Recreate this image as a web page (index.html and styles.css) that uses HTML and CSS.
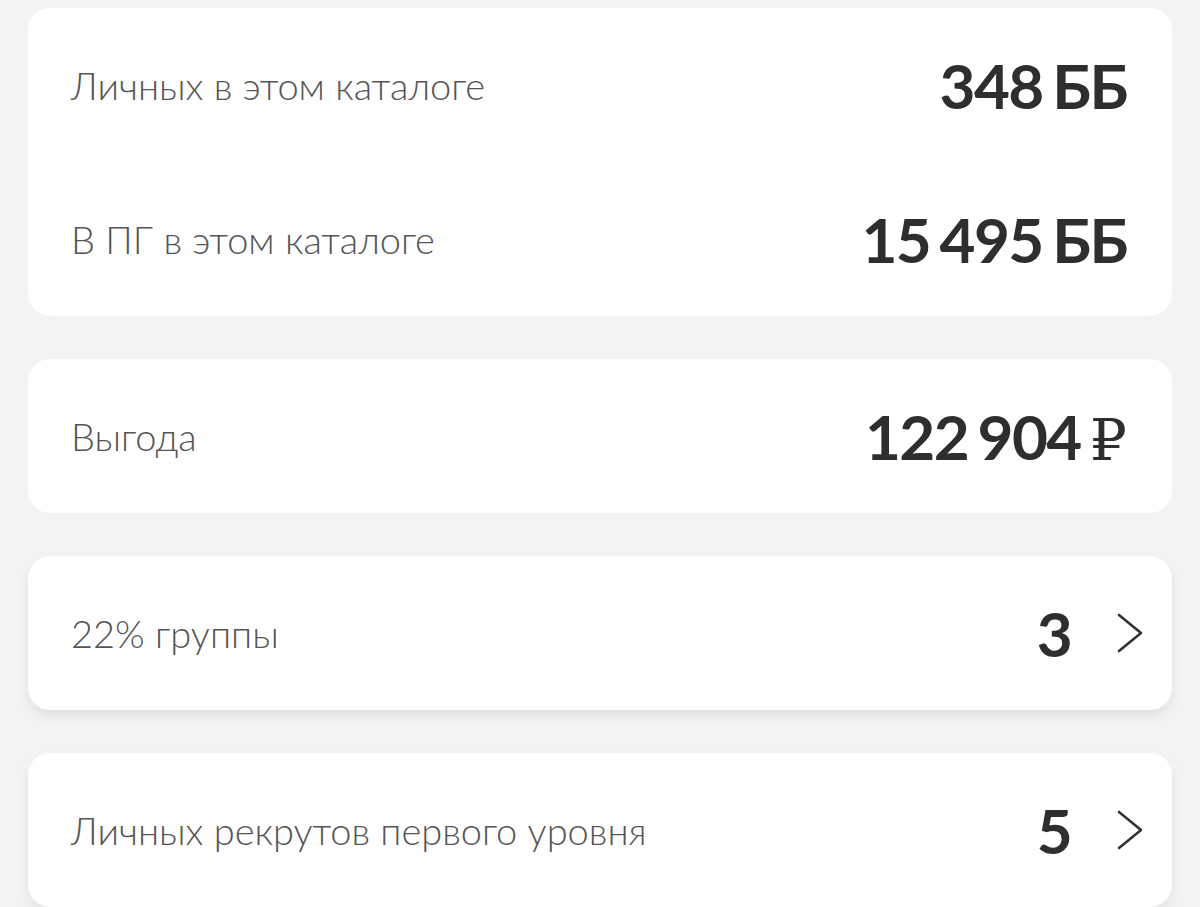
FILE: index.html
```html
<!DOCTYPE html>
<html lang="ru">
<head>
<meta charset="utf-8">
<link rel="stylesheet" href="styles.css">
</head>
<body>
<main class="page">
  <section class="card">
    <div class="row">
      <span class="label">Личных в этом каталоге</span>
      <span class="value">348 ББ</span>
    </div>
    <div class="row">
      <span class="label">В ПГ в этом каталоге</span>
      <span class="value">15 495 ББ</span>
    </div>
  </section>
  <section class="card">
    <div class="row">
      <span class="label">Выгода</span>
      <span class="value">122 904 <span class="rub">₽</span></span>
    </div>
  </section>
  <section class="card card-link">
    <div class="row row-link">
      <span class="label">22% группы</span>
      <span class="value-wrap">
        <span class="value">3</span>
        <svg class="chevron" viewBox="0 0 26 40" width="26" height="40"><path d="M2 2 L24 20 L2 38" fill="none" stroke="#333" stroke-width="2.6" stroke-linecap="round" stroke-linejoin="round"/></svg>
      </span>
    </div>
  </section>
  <section class="card card-link">
    <div class="row row-link">
      <span class="label">Личных рекрутов первого уровня</span>
      <span class="value-wrap">
        <span class="value">5</span>
        <svg class="chevron" viewBox="0 0 26 40" width="26" height="40"><path d="M2 2 L24 20 L2 38" fill="none" stroke="#333" stroke-width="2.6" stroke-linecap="round" stroke-linejoin="round"/></svg>
      </span>
    </div>
  </section>
</main>
</body>
</html>
```

FILE: styles.css
```css
html, body {
  margin: 0;
  padding: 0;
  background: #f3f3f3;
}
body {
  font-family: "Lato", "Noto Sans", "DejaVu Sans", sans-serif;
  height: 907px;
  overflow: hidden;
}
.page {
  padding: 8px 28px 0 28px;
  display: flex;
  flex-direction: column;
  gap: 43px;
}
.card {
  background: #ffffff;
  border-radius: 22px;
  display: flex;
  flex-direction: column;
}
.card-link {
  box-shadow: 0 6px 12px rgba(0, 0, 0, 0.07);
}
.row {
  height: 154px;
  display: flex;
  align-items: center;
  justify-content: space-between;
  padding: 0 45px 0 43px;
}
.row-link {
  padding-right: 29px;
}
.label {
  font-size: 38px;
  font-weight: 300;
  color: #555555;
  letter-spacing: 0;
}
.value {
  font-size: 62px;
  font-weight: 700;
  color: #2e2e2e;
  letter-spacing: -1.6px;
  word-spacing: -4px;
}
.rub {
  font-family: "Liberation Serif", "DejaVu Serif", serif;
  font-weight: 400;
  font-size: 58px;
  letter-spacing: 0;
}
.value-wrap {
  display: flex;
  align-items: center;
  gap: 46px;
}
.chevron {
  display: block;
}
```
